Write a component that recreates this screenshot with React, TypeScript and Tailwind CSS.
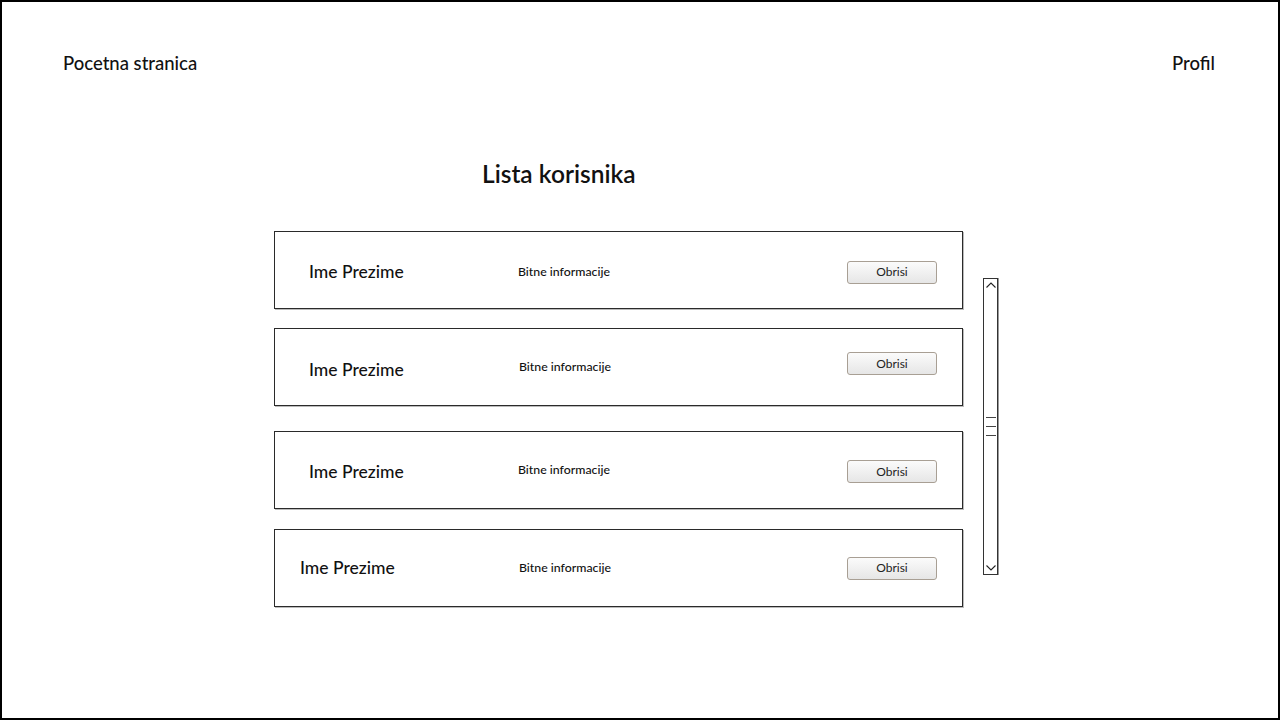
import React from 'react';

type User = {
  name: string;
  info: string;
  mt: string;
  namePl: string;
  infoPl: string;
  nameY: string;
  infoY: string;
  btnY: string;
};

// per-row nudges follow the wireframe, where rows are not perfectly aligned
const users: User[] = [
  { name: 'Ime Prezime', info: 'Bitne informacije', mt: 'mt-0', namePl: 'pl-[34px]', infoPl: 'pl-0', nameY: 'mt-[4px]', infoY: 'mt-[4px]', btnY: 'mt-[4px]' },
  { name: 'Ime Prezime', info: 'Bitne informacije', mt: 'mt-[19px]', namePl: 'pl-[34px]', infoPl: 'pl-[1px]', nameY: 'mt-[7px]', infoY: 'mt-[1px]', btnY: 'mb-[7px]' },
  { name: 'Ime Prezime', info: 'Bitne informacije', mt: 'mt-[25px]', namePl: 'pl-[34px]', infoPl: 'pl-0', nameY: 'mt-[5px]', infoY: 'mt-0', btnY: 'mt-[3px]' },
  { name: 'Ime Prezime', info: 'Bitne informacije', mt: 'mt-[20px]', namePl: 'pl-[25px]', infoPl: 'pl-[1px]', nameY: 'mt-0', infoY: 'mt-[1px]', btnY: 'mt-0' },
];

const UserCard: React.FC<{ user: User }> = ({ user }) => (
  <div
    className={`${user.mt} h-[78px] w-[689px] border border-[#2a2a2a] flex items-center shadow-[1px_1px_0_#bbb]`}
  >
    <div className={`${user.namePl} ${user.nameY} w-[243px] text-[17.5px] font-medium text-[#111]`}>
      {user.name}
    </div>
    <div className={`${user.infoPl} ${user.infoY} w-[329px] text-[12.3px] font-medium text-[#111]`}>
      {user.info}
    </div>
    <button
      className={`${user.btnY} w-[90px] h-[23px] rounded-[3px] border border-[#a89f94] bg-gradient-to-b from-[#fbfbfb] to-[#e6e6e6] text-[12px] text-[#222] flex items-center justify-center`}
    >
      Obrisi
    </button>
  </div>
);

const Scrollbar: React.FC = () => (
  <div className="ml-[20px] mt-[47px] w-[15px] h-[297px] border border-[#333] shadow-[1px_0_0_#999] flex flex-col items-center justify-between py-[2px]">
    <svg width="12" height="8" viewBox="0 0 12 8" fill="none">
      <path d="M1.5 6.5 L6 2 L10.5 6.5" stroke="#222" strokeWidth="1.1" />
    </svg>
    <div className="flex flex-col gap-[8px] items-center">
      <div className="w-[10px] h-px bg-[#444]" />
      <div className="w-[10px] h-px bg-[#444]" />
      <div className="w-[10px] h-px bg-[#444]" />
    </div>
    <svg width="12" height="8" viewBox="0 0 12 8" fill="none">
      <path d="M1.5 1.5 L6 6 L10.5 1.5" stroke="#222" strokeWidth="1.1" />
    </svg>
  </div>
);

const App: React.FC = () => {
  return (
    <div
      className="w-[1280px] h-[720px] border-2 border-black bg-white flex flex-col text-[#111]"
      style={{ fontFamily: 'Lato, "Noto Sans", sans-serif' }}
    >
      {/* Header */}
      <div className="flex justify-between pt-[50px] pl-[61px] pr-[63px]">
        <span className="text-[18.5px] leading-[22px] font-medium">Pocetna stranica</span>
        <span className="text-[18.5px] leading-[22px] font-medium">Profil</span>
      </div>

      <h1 className="mt-[86px] ml-[480px] text-[24.5px] leading-[28px] font-semibold">
        Lista korisnika
      </h1>

      <div className="mt-[43px] ml-[272px] flex items-start">
        <div className="flex flex-col">
          {users.map((u, i) => (
            <UserCard key={i} user={u} />
          ))}
        </div>
        <Scrollbar />
      </div>
    </div>
  );
};

export default App;
